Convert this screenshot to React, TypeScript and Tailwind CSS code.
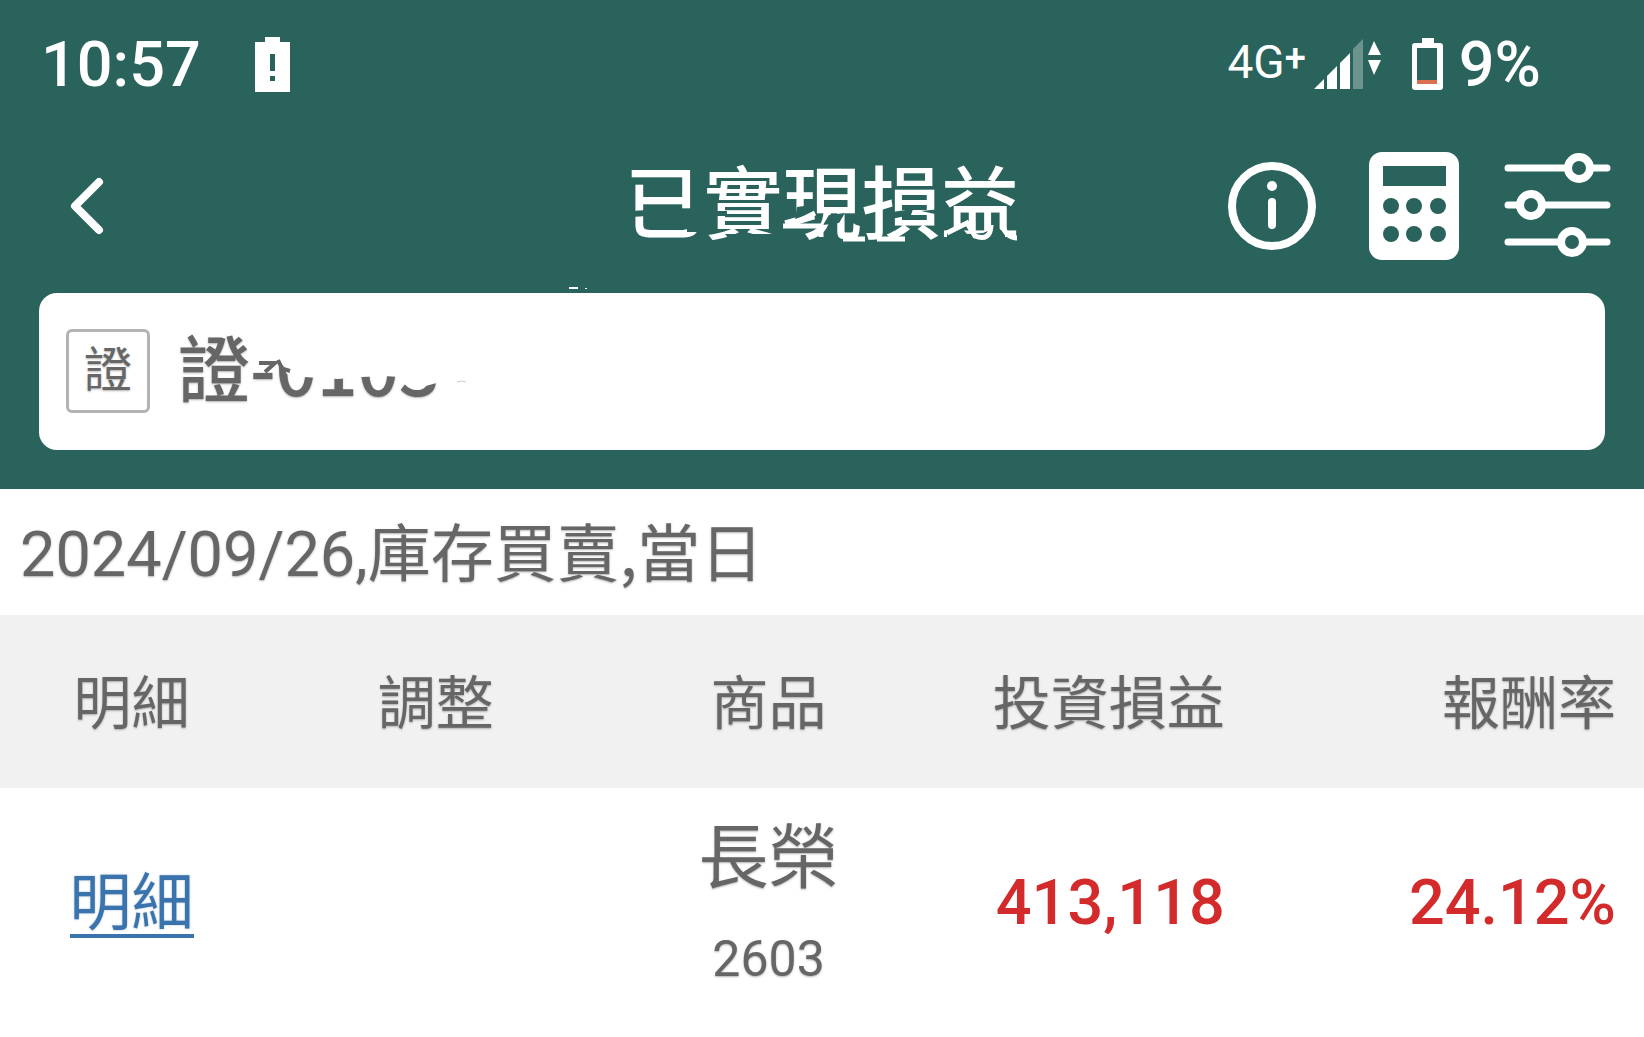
import React from 'react';

interface Holding {
  code: string;
  name: string;
  profit: string;
  rate: string;
}

const holdings: Holding[] = [
  { code: '2603', name: '長榮', profit: '413,118', rate: '24.12%' }
];

// 狀態列：電量警示
const BatteryAlertIcon: React.FC = () => (
  <svg width="35" height="55" viewBox="0 0 35 55" fill="none" aria-hidden="true">
    <path d="M10 0h15v5h10v50H0V5h10z" fill="#fff" />
    <path d="M15 17h5v17h-5zM15 39h5v5h-5z" fill="#2a635c" />
  </svg>
);

// 狀態列：訊號強度
const SignalIcon: React.FC = () => (
  <svg width="68" height="50" viewBox="0 0 68 50" aria-hidden="true">
    <path d="M0 50L10 40V50zM13 37L23 27V50H13zM26 24L36 14V50H26z" fill="#fff" />
    <path d="M39 10L49 0V50H39z" fill="#6d938e" />
    <path d="M60 2L67 16H54zM54 21H67L60 36z" fill="#fff" />
  </svg>
);

// 狀態列：低電量
const BatteryLowIcon: React.FC = () => (
  <svg width="31" height="52" viewBox="0 0 31 52" aria-hidden="true">
    <path
      fillRule="evenodd"
      d="M10 0h12v5h6a3 3 0 0 1 3 3v41a3 3 0 0 1-3 3H3a3 3 0 0 1-3-3V8a3 3 0 0 1 3-3h7zM5 10v36h20V10z"
      fill="#fff"
    />
    <path d="M5 42h20v4H5z" fill="#d9704f" />
  </svg>
);

const BackIcon: React.FC = () => (
  <svg width="34" height="58" viewBox="0 0 34 58" fill="none" aria-hidden="true">
    <path d="M29 5L5 29L29 53" stroke="#fff" strokeWidth="8" strokeLinecap="round" strokeLinejoin="round" />
  </svg>
);

const InfoIcon: React.FC = () => (
  <svg width="88" height="88" viewBox="0 0 88 88" fill="none" aria-hidden="true">
    <circle cx="44" cy="44" r="40" stroke="#fff" strokeWidth="8" />
    <circle cx="44" cy="24" r="5" fill="#fff" />
    <path d="M44 40V63" stroke="#fff" strokeWidth="8" strokeLinecap="round" />
  </svg>
);

const CalculatorIcon: React.FC = () => (
  <svg width="90" height="108" viewBox="0 0 90 108" aria-hidden="true">
    <rect width="90" height="108" rx="13" fill="#fff" />
    <path d="M14 14h63v20H14z" fill="#2a635c" />
    {[22, 45, 69].map((x) => (
      <g key={x} fill="#2a635c">
        <circle cx={x} cy="54" r="8" />
        <circle cx={x} cy="82" r="8" />
      </g>
    ))}
  </svg>
);

const SlidersIcon: React.FC = () => (
  <svg width="107" height="108" viewBox="0 0 107 108" fill="none" stroke="#fff" strokeLinecap="round" aria-hidden="true">
    <path d="M4 16H62M88 16H103M4 53H15M40 53H103M4 90H55M81 90H103" strokeWidth="7" />
    <circle cx="75" cy="16" r="11" strokeWidth="8" />
    <circle cx="27" cy="53" r="11" strokeWidth="8" />
    <circle cx="68" cy="90" r="11" strokeWidth="8" />
  </svg>
);

// 標題下半部的塗抹痕跡
const TitleSmear: React.FC = () => (
  <svg className="absolute inset-0 overflow-visible" width="396" height="80" viewBox="0 0 396 80" aria-hidden="true">
    <path
      d="M6 46L40 44V50L6 52zM62 44H84V67H62zM92 46H102V51H92zM138 69H166V84H138zM100 69H138V84H112zM172 42L186 40L182 50L170 54zM204 50L220 48L214 58L198 60zM260 48L288 44L286 50L266 54zM296 46L316 44L310 49zM322 64L336 62L342 69L358 68L372 62L380 68V84H322z"
      fill="#2a635c"
    />
    <path
      d="M174 56L190 48M158 61H196V72M218 74H240M252 74H280M322 68L342 58L350 71C360 75 366 71 366 60M378 62Q382 73 392 73"
      stroke="#fff"
      strokeWidth="5"
      fill="none"
    />
    <path d="M-56 122h9v2h-9zM-40 123h2v1h-2z" fill="#fff" />
  </svg>
);

// 遮蔽帳號的上半部
const AccountMask: React.FC = () => (
  <svg className="absolute top-1.5 left-[72px]" width="260" height="108" viewBox="0 0 260 108" aria-hidden="true">
    <path d="M0 0H260V108H204V60L190 65L172 70L152 66L150 60L134 59L112 60L88 62L70 61L54 60L44 62L36 56L34 50L28 42L24 40H2V0z" fill="#fff" />
    <path d="M9 46H25L15 55M28 43L34 56M30 51L40 54" stroke="#666" strokeWidth="4" fill="none" />
    <path d="M207 65q5-2 9 0" stroke="#ccc" fill="none" />
  </svg>
);

const App: React.FC = () => {
  return (
    <div className="min-h-screen bg-white font-[Roboto,'Noto_Sans_CJK_TC',sans-serif] text-[#666]">
      <header className="bg-[#2a635c] px-[39px] pb-[39px] text-white">
        {/* 狀態列 */}
        <div className="flex h-32 items-center justify-between pr-[64px] pl-0.5">
          <div className="flex items-center gap-[54px]">
            <span className="text-[63px] leading-none font-medium">10:57</span>
            <BatteryAlertIcon />
          </div>
          <div className="flex items-center">
            <span className="flex items-start pb-1 text-[46px] leading-none">
              4G<sup className="top-0 text-[38px] leading-none font-medium">+</sup>
            </span>
            <span className="ml-2">
              <SignalIcon />
            </span>
            <span className="ml-[30px]">
              <BatteryLowIcon />
            </span>
            <span className="ml-4 text-[63px] leading-none font-medium">9%</span>
          </div>
        </div>

        {/* 標題列 */}
        <div className="grid h-[165px] grid-cols-[1fr_auto_1fr] items-center pb-2.5">
          <button type="button" aria-label="返回" className="ml-[31px] justify-self-start">
            <BackIcon />
          </button>
          <h1 className="relative pt-0.5 text-[79px] leading-none font-medium">
            已實現損益
            <TitleSmear />
          </h1>
          <div className="-mr-1.5 flex items-center justify-self-end">
            <button type="button" aria-label="說明">
              <InfoIcon />
            </button>
            <button type="button" aria-label="計算機" className="ml-[53px]">
              <CalculatorIcon />
            </button>
            <button type="button" aria-label="篩選" className="ml-[45px]">
              <SlidersIcon />
            </button>
          </div>
        </div>

        {/* 帳號選擇 */}
        <button
          type="button"
          className="flex h-[157px] w-full items-center gap-7 rounded-[18px] bg-white px-[27px] pb-0.5 text-[#666] text-shadow-[0_1px_2px_#66666680]"
        >
          <span className="flex size-[84px] items-center justify-center rounded-md border-3 border-[#b3b3b3] text-[48px] leading-none">
            證
          </span>
          <span className="relative pb-3 font-['Noto_Sans_CJK_TC',sans-serif] text-[72px] leading-[108px] font-medium">
            證-0103
            <AccountMask />
          </span>
        </button>
      </header>

      <main className="text-shadow-[0_1px_2px_#66666680]">
        <p className="h-[126px] px-5 text-[63px] leading-[120px]">
          2024/09/26,庫存買賣<span className="font-['Noto_Sans_CJK_TC',sans-serif]">,</span>當日
        </p>

        <table className="w-full table-fixed border-collapse">
          <colgroup>
            <col className="w-[16%]" />
            <col className="w-[21%]" />
            <col className="w-[19.5%]" />
            <col className="w-[18%]" />
            <col />
          </colgroup>
          <thead>
            <tr className="h-[173px] bg-[#f1f1f1] text-[58px] leading-none">
              <th className="pt-1 font-normal">明細</th>
              <th className="pt-1 font-normal">調整</th>
              <th className="pt-1 font-normal">商品</th>
              <th className="pt-1 text-right font-normal">投資損益</th>
              <th className="pt-1 pr-7 text-right font-normal">報酬率</th>
            </tr>
          </thead>
          <tbody>
            {holdings.map((item) => (
              <tr key={item.code} className="h-[230px] text-center">
                <td className="pt-1">
                  <a
                    href={`#${item.code}`}
                    className="inline-block h-[65px] border-b-4 border-[#3b74ac] text-[62px] leading-none text-[#3b74ac] text-shadow-[0_0_2px_#3b74ac80]"
                  >
                    明細
                  </a>
                </td>
                <td />
                <td className="pt-1">
                  <div className="text-[70px] leading-[108px]">{item.name}</div>
                  <div className="text-[50px] leading-[92px]">{item.code}</div>
                </td>
                <td className="text-right text-[63px] font-medium text-[#d32b2b] text-shadow-none">{item.profit}</td>
                <td className="pr-7 text-right text-[63px] font-medium text-[#d32b2b] text-shadow-none">{item.rate}</td>
              </tr>
            ))}
          </tbody>
        </table>
      </main>
    </div>
  );
};

export default App;
